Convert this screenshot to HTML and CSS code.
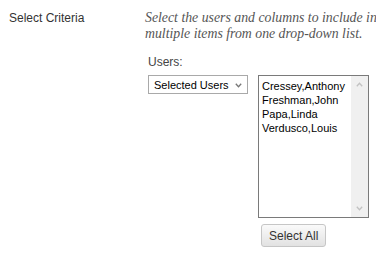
FILE: index.html
```html
<!DOCTYPE html>
<html lang="en">
<head>
    <meta charset="UTF-8">
    <title>Select Criteria</title>
    <link rel="stylesheet" href="styles.css">
</head>
<body>
    <div class="criteria-row">
        <div class="criteria-label">Select Criteria</div>
        <div class="criteria-body">
            <p class="hint">Select the users and columns to include in<br>multiple items from one drop-down list.</p>

            <div class="field">
                <div class="field-label">Users:</div>
                <div class="field-controls">
                    <div class="dropdown">
                        <span>Selected Users</span>
                        <svg width="7" height="5" viewBox="0 0 7 5"><path d="M0.8 0.8 L3.5 3.8 L6.2 0.8" fill="none" stroke="#777" stroke-width="1.3"/></svg>
                    </div>
                    <div class="picker">
                        <div class="listbox">
                            <ul class="options">
                                <li>Cressey,Anthony</li>
                                <li>Freshman,John</li>
                                <li>Papa,Linda</li>
                                <li>Verdusco,Louis</li>
                            </ul>
                            <div class="scrollbar">
                                <svg width="7" height="5" viewBox="0 0 7 5"><path d="M0.8 4.2 L3.5 1.2 L6.2 4.2" fill="none" stroke="#c2c2c2" stroke-width="1.3"/></svg>
                                <svg width="7" height="5" viewBox="0 0 7 5"><path d="M0.8 0.8 L3.5 3.8 L6.2 0.8" fill="none" stroke="#c2c2c2" stroke-width="1.3"/></svg>
                            </div>
                        </div>
                        <button type="button">Select All</button>
                    </div>
                </div>
            </div>
        </div>
    </div>
</body>
</html>
```

FILE: styles.css
```css
body {
    margin: 0;
    background: #fff;
    font-family: "Liberation Sans", Arial, sans-serif;
    color: #333;
    overflow: hidden;
}

.criteria-row {
    display: flex;
    padding-top: 10px;
}

.criteria-label {
    flex-shrink: 0;
    width: 136px;
    padding-left: 9px;
    font-size: 12px;
    line-height: 16px;
}

.hint {
    margin: 0;
    font-family: "Liberation Serif", Georgia, serif;
    font-style: italic;
    font-size: 13.8px;
    line-height: 16px;
    color: #555;
    white-space: nowrap;
}

.field {
    margin-left: 3px;
    margin-top: 12px;
}

.field-label {
    font-size: 12px;
    line-height: 16px;
    color: #444;
    margin-bottom: 5px;
}

.field-controls {
    display: flex;
    gap: 10px;
    align-items: flex-start;
}

.dropdown {
    width: 88px;
    height: 17px;
    border: 1px solid #a9a9a9;
    display: flex;
    align-items: center;
    justify-content: space-between;
    padding: 0 5px 0 5px;
    font-size: 11px;
    color: #000;
}

.dropdown svg {
    margin-top: 2px;
}

.listbox {
    width: 109px;
    height: 141px;
    border: 1px solid #7a7a7a;
    display: flex;
}

.options {
    list-style: none;
    margin: 0;
    padding: 3px 0 0 3px;
    flex: 1;
    font-size: 11px;
    line-height: 14px;
    color: #000;
}

.scrollbar {
    width: 17px;
    background: #f0f0f0;
    display: flex;
    flex-direction: column;
    justify-content: space-between;
    align-items: center;
    padding: 6px 0 6px;
}

button {
    display: block;
    margin: 6px 0 0 3px;
    padding: 0 7px;
    height: 23px;
    border: 1px solid #c6c6c6;
    border-radius: 3px;
    background: linear-gradient(#fafafa, #e2e2e2);
    font-family: "Liberation Sans", Arial, sans-serif;
    font-size: 12px;
    color: #333;
}
```
